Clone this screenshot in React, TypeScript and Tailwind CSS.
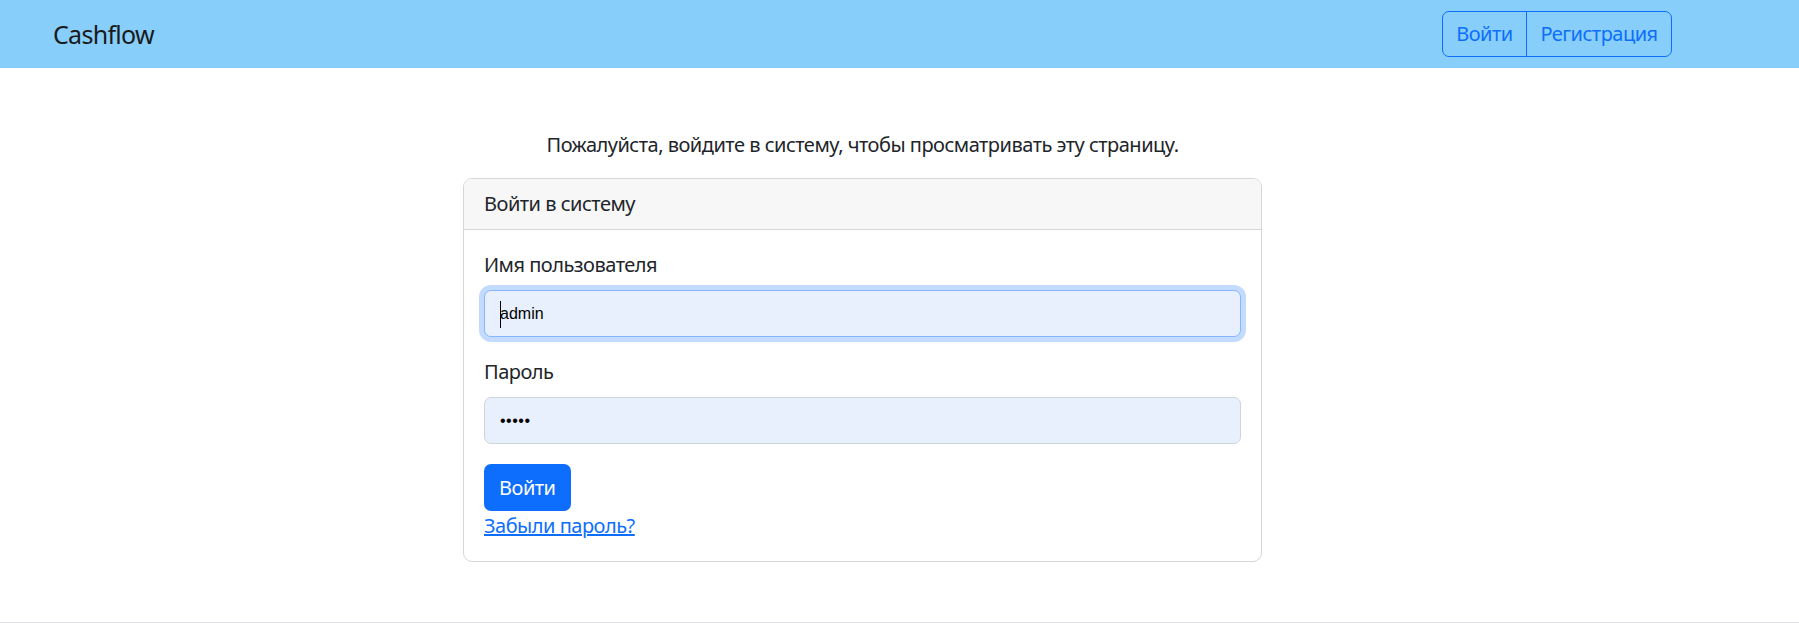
import React from "react";

export default function App() {
  return (
    <div
      className="min-h-screen bg-white text-[#212529] tracking-[-0.5px]"
      style={{ fontFamily: '"Noto Sans", "Open Sans", sans-serif' }}
    >
      <header className="h-[68px] bg-[#87cefa] flex items-center justify-between pl-[53px] pr-[127px]">
        <span className="text-[25px] leading-[30px] text-[#1a1a1a] tracking-[-0.7px]">Cashflow</span>
        <div className="flex h-[46px] rounded-[7px] border border-[#0d6efd] text-[20px] text-[#0d6efd]">
          <div className="w-[84px] flex items-center justify-center border-r border-[#0d6efd]">Войти</div>
          <div className="w-[144px] flex items-center justify-center">Регистрация</div>
        </div>
      </header>

      <main className="pt-[62px]">
        <div className="ml-[463px] w-[799px]">
          <p className="h-[30px] leading-[30px] text-[20px] text-center mb-[18px]">
            Пожалуйста, войдите в систему, чтобы просматривать эту страницу.
          </p>
          <div className="rounded-[9px] border border-[#d6d6d6] overflow-hidden">
            <div className="h-[51px] bg-[#f7f7f7] border-b border-[#d6d6d6] px-[20px] flex items-center text-[20px]">
              Войти в систему
            </div>
            <div className="px-[20px] pt-[20px] pb-[20px] text-[20px]">
              <div className="leading-[30px] mb-[10px]">Имя пользователя</div>
              <div className="relative h-[47px] rounded-[7px] border border-[#86b7fe] bg-[#e8f0fe] shadow-[0_0_0_5px_#c2dbfe] flex items-center pl-[15px] mb-[20px]">
                <span className="absolute left-[15px] top-[10px] w-px h-[27px] bg-black" />
                <span className="text-[16px] text-black tracking-normal" style={{ fontFamily: '"Liberation Sans", Arial, sans-serif' }}>
                  admin
                </span>
              </div>
              <div className="leading-[30px] mb-[10px]">Пароль</div>
              <div className="h-[47px] rounded-[7px] border border-[#ced4da] bg-[#e8f0fe] flex items-center pl-[15px] mb-[20px]">
                <span className="text-[16px] text-black tracking-[0.5px]" style={{ fontFamily: '"Liberation Sans", Arial, sans-serif' }}>
                  •••••
                </span>
              </div>
              <div className="inline-flex h-[47px] px-[15px] items-center rounded-[7px] bg-[#0d6efd] text-white">
                Войти
              </div>
              <div className="leading-[30px]">
                <a href="#" className="text-[#0d6efd] underline">
                  Забыли пароль?
                </a>
              </div>
            </div>
          </div>
        </div>
        <div className="mt-[60px] border-t border-[#dee2e6]" />
      </main>
    </div>
  );
}
